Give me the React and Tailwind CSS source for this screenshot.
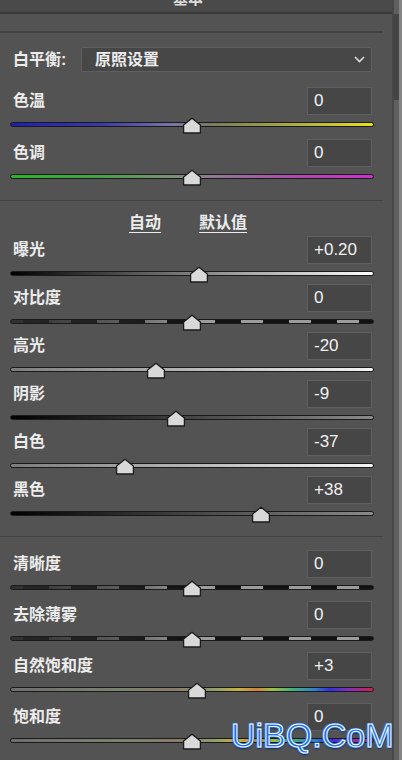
import React from "react";

const TRACK = {
  temp: "bg-[linear-gradient(to_right,#1e1eb4_0%,#3a3aa8_25%,#7878a8_45%,#7a7a62_55%,#b0b040_80%,#e8e020_100%)]",
  tint: "bg-[linear-gradient(to_right,#2ab42a_0%,#4aa04a_25%,#7a907a_45%,#907a90_55%,#b048b0_80%,#cc30cc_100%)]",
  exposure: "bg-[linear-gradient(to_right,#000000,#ffffff)]",
  dashed:
    "bg-[image:linear-gradient(to_right,rgba(40,40,40,0.95),rgba(40,40,40,0.55)_30%,rgba(40,40,40,0)_50%),repeating-linear-gradient(to_right,#9c9c9c_0px,#9c9c9c_12px,#121212_12px,#121212_38px,#9c9c9c_38px,#9c9c9c_48px)]",
  grayToWhite: "bg-[linear-gradient(to_right,#7c7c7c,#f4f4f4)]",
  blackToGray: "bg-[linear-gradient(to_right,#000000,#8a8a8a)]",
  rainbow:
    "bg-[linear-gradient(to_right,#6e6e6e_0%,#7a8270_30%,#8a7a6a_45%,#8a9a70_55%,#c8b040_63%,#d08040_68%,#a0c040_72%,#40b080_78%,#3080d0_84%,#3030e0_88%,#8030c0_93%,#d02050_100%)]",
};

// thumb centre in px: 192 + value / range * 182
const pos = (v, range) => 192 + (v / range) * 182;

const topRows = [
  { label: "色温", value: "0", x: pos(0, 1), track: TRACK.temp },
  { label: "色调", value: "0", x: pos(0, 1), track: TRACK.tint },
];

const toneRows = [
  { label: "曝光", value: "+0.20", x: pos(0.2, 5), track: TRACK.exposure },
  { label: "对比度", value: "0", x: pos(0, 1), track: TRACK.dashed },
  { label: "高光", value: "-20", x: pos(-20, 100), track: TRACK.grayToWhite },
  { label: "阴影", value: "-9", x: pos(-9, 100), track: TRACK.blackToGray },
  { label: "白色", value: "-37", x: pos(-37, 100), track: TRACK.grayToWhite },
  { label: "黑色", value: "+38", x: pos(38, 100), track: TRACK.blackToGray },
];

const presenceRows = [
  { label: "清晰度", value: "0", x: pos(0, 1), track: TRACK.dashed },
  { label: "去除薄雾", value: "0", x: pos(0, 1), track: TRACK.dashed },
  { label: "自然饱和度", value: "+3", x: pos(3, 100), track: TRACK.rainbow },
  { label: "饱和度", value: "0", x: pos(0, 1), track: TRACK.rainbow },
];

function Thumb({ x }) {
  return (
    <svg
      className="absolute top-[2px]"
      style={{ left: x - 10 }}
      width="20"
      height="17"
      viewBox="0 0 20 17"
    >
      <path
        d="M10 1.2 L18.4 8 L18.4 16 L1.6 16 L1.6 8 Z"
        fill="#d9d9d9"
        stroke="#1c1c1c"
        strokeWidth="1.3"
        strokeLinejoin="round"
      />
    </svg>
  );
}

function SliderRow({ label, value, x, track, area }) {
  return (
    <div>
      <div className="flex h-[28px] items-center justify-between pl-[13px] pr-[20px]">
        <span className="text-[16px] font-semibold text-[#ececec]">{label}</span>
        <div className="flex h-[28px] w-[65px] items-center border border-[#5f5f5f] bg-[#464646] pl-[6px] text-[17px] text-[#f0f0f0]">
          {value}
        </div>
      </div>
      <div className={`relative pt-[7px] ${area}`}>
        <div className={`ml-[10px] mr-[18px] h-[5px] rounded-full border border-[#1a1a1a] ${track}`} />
        <Thumb x={x} />
      </div>
    </div>
  );
}

function Watermark() {
  return (
    <div className="pointer-events-none absolute left-[231px] top-[718px] text-[34px] leading-none text-[#1f6fe2] [-webkit-text-stroke:1px_#ffffff] [text-shadow:1px_1px_0_#1f6fe2,-1px_-1px_0_#1f6fe2,1px_-1px_0_#1f6fe2,-1px_1px_0_#1f6fe2,0_2px_2px_#0d2f66]">
      UiBQ.CoM
    </div>
  );
}

export default function App() {
  return (
    <div className="relative flex h-[760px] w-[402px] overflow-hidden bg-[#535353] font-['Liberation_Sans','Noto_Sans_CJK_SC',sans-serif]">
      <div className="w-[392px]">
        {/* panel title, cut off at the top */}
        <div className="h-[12px] overflow-hidden bg-[#4a4a4a] pr-[16px] text-center">
          <div className="-mt-[9px] text-[15px] leading-[15px] font-semibold text-[#dcdcdc]">基本</div>
        </div>
        <div className="h-[2px] bg-[#3a3a3a]" />
        <div className="mr-[9px] mt-[17px] h-[2px] bg-[#414141]" />

        {/* white balance */}
        <div className="mt-[14px] flex h-[25px] items-center pl-[13px] pr-[20px]">
          <span className="w-[68px] text-[16px] font-semibold text-[#ececec]">白平衡:</span>
          <div className="flex h-[25px] flex-1 items-center justify-between rounded-[2px] border border-[#5f5f5f] bg-[#474747] pl-[13px] pr-[6px]">
            <span className="text-[16px] font-semibold text-[#ececec]">原照设置</span>
            <svg width="11" height="7" viewBox="0 0 11 7">
              <polyline points="1,1 5.5,5.5 10,1" fill="none" stroke="#dcdcdc" strokeWidth="1.6" />
            </svg>
          </div>
        </div>

        <div className="mt-[15px]">
          {topRows.map((r) => (
            <SliderRow key={r.label} {...r} area="h-[24px]" />
          ))}
        </div>

        <div className="mt-[9px] mr-[9px] h-[1px] bg-[#424242]" />

        <div className="flex h-[35px] items-start gap-[38px] pl-[129px] pt-[12px] text-[16px] leading-[20px] font-semibold text-[#ececec]">
          <span className="underline decoration-[1px] underline-offset-[4px]">自动</span>
          <span className="underline decoration-[1px] underline-offset-[4px]">默认值</span>
        </div>

        <div>
          {toneRows.map((r) => (
            <SliderRow key={r.label} {...r} area="h-[20px]" />
          ))}
        </div>

        <div className="mt-[12px] mr-[9px] h-[1px] bg-[#424242]" />

        <div className="mt-[13px]">
          {presenceRows.map((r) => (
            <SliderRow key={r.label} {...r} area="h-[23px]" />
          ))}
        </div>
      </div>

      {/* scrollbar */}
      <div className="flex w-[10px]">
        <div className="w-[2px] bg-[#474747]" />
        <div className="flex w-[5px] flex-col bg-[#5f5f5f]">
          <div className="mt-[14px] h-[86px] bg-[#444444]" />
        </div>
        <div className="w-[3px] bg-[#858585]" />
      </div>

      <Watermark />
    </div>
  );
}
